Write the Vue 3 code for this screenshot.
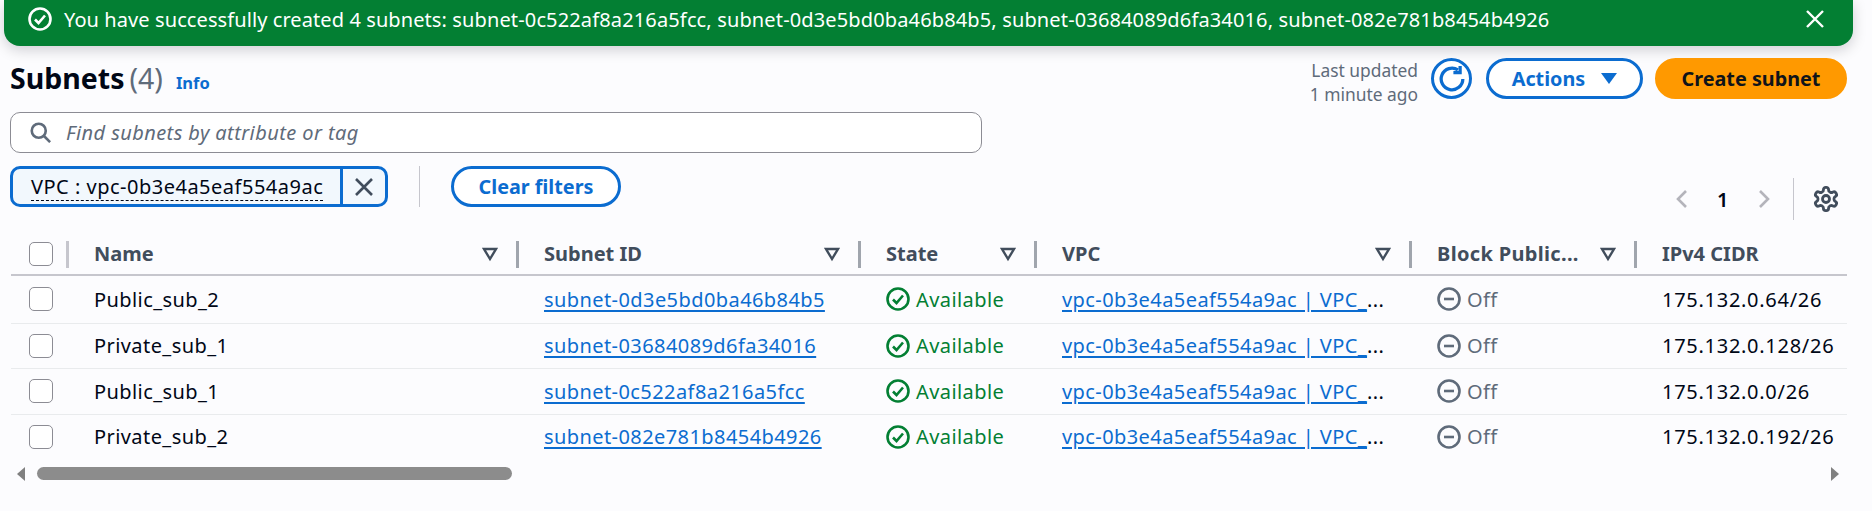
<script setup>
const vpc = 'vpc-0b3e4a5eaf554a9ac | VPC_'
const rows = [
  { name: 'Public_sub_2', id: 'subnet-0d3e5bd0ba46b84b5', cidr: '175.132.0.64/26' },
  { name: 'Private_sub_1', id: 'subnet-03684089d6fa34016', cidr: '175.132.0.128/26' },
  { name: 'Public_sub_1', id: 'subnet-0c522af8a216a5fcc', cidr: '175.132.0.0/26' },
  { name: 'Private_sub_2', id: 'subnet-082e781b8454b4926', cidr: '175.132.0.192/26' }
]
const columns = ['Name', 'Subnet ID', 'State', 'VPC', 'Block Public...']
</script>

<template>
  <div class="page">
    <div class="banner">
      <svg class="banner-icon" viewBox="0 0 24 24" fill="none" stroke="currentColor">
        <circle cx="12" cy="12" r="10.5" stroke-width="2.6" />
        <path d="M7 12.5l3.5 3.5L17 8.5" stroke-width="2.6" />
      </svg>
      <span class="banner-text">You have successfully created 4 subnets: <span class="ids">subnet-0c522af8a216a5fcc, subnet-0d3e5bd0ba46b84b5, subnet-03684089d6fa34016, subnet-082e781b8454b4926</span></span>
      <svg class="banner-close" viewBox="0 0 20 20" fill="none" stroke="currentColor">
        <path d="M2 2l16 16M18 2L2 18" stroke-width="2.4" />
      </svg>
    </div>

    <div class="content">
      <header class="head">
        <div class="title">
          <h1>Subnets</h1><span class="count">(4)</span><a class="info">Info</a>
        </div>
        <div class="head-actions">
          <div class="updated">Last updated<br />1 minute ago</div>
          <button class="btn round">
            <svg viewBox="0 0 24 24" fill="none" stroke="currentColor" stroke-width="3">
              <path d="M22 12a10 10 0 1 1-4.5-8.4" />
              <path d="M19.5 0v6.2h-6.2" />
            </svg>
          </button>
          <button class="btn actions">Actions<span class="caret"></span></button>
          <button class="btn primary">Create subnet</button>
        </div>
      </header>

      <div class="search">
        <svg viewBox="0 0 24 24" fill="none" stroke="currentColor" stroke-width="3">
          <circle cx="10" cy="10" r="8" />
          <path d="M16 16l7 7" />
        </svg>
        <span>Find subnets by attribute or tag</span>
      </div>

      <div class="filters">
        <div class="token">
          <span class="token-label"><span>VPC : vpc-0b3e4a5eaf554a9ac</span></span>
          <span class="token-x">
            <svg viewBox="0 0 20 20" fill="none" stroke="currentColor">
              <path d="M2 2l16 16M18 2L2 18" stroke-width="2.6" />
            </svg>
          </span>
        </div>
        <span class="filter-sep"></span>
        <button class="btn clear">Clear filters</button>
        <div class="pager">
          <svg class="chev" viewBox="0 0 12 20" fill="none" stroke="currentColor" stroke-width="2.6"><path d="M10 2L2 10l8 8" /></svg>
          <span class="page-no">1</span>
          <svg class="chev" viewBox="0 0 12 20" fill="none" stroke="currentColor" stroke-width="2.6"><path d="M2 2l8 8-8 8" /></svg>
          <span class="pager-sep"></span>
          <svg class="gear" viewBox="0 0 24 24" fill="none" stroke="currentColor" stroke-width="2.4">
            <path d="M12.22 2h-.44a2 2 0 0 0-2 2v.18a2 2 0 0 1-1 1.73l-.43.25a2 2 0 0 1-2 0l-.15-.08a2 2 0 0 0-2.73.73l-.22.38a2 2 0 0 0 .73 2.73l.15.1a2 2 0 0 1 1 1.72v.51a2 2 0 0 1-1 1.74l-.15.09a2 2 0 0 0-.73 2.73l.22.38a2 2 0 0 0 2.73.73l.15-.08a2 2 0 0 1 2 0l.43.25a2 2 0 0 1 1 1.73V20a2 2 0 0 0 2 2h.44a2 2 0 0 0 2-2v-.18a2 2 0 0 1 1-1.73l.43-.25a2 2 0 0 1 2 0l.15.08a2 2 0 0 0 2.73-.73l.22-.39a2 2 0 0 0-.73-2.73l-.15-.08a2 2 0 0 1-1-1.74v-.5a2 2 0 0 1 1-1.74l.15-.09a2 2 0 0 0 .73-2.73l-.22-.38a2 2 0 0 0-2.73-.73l-.15.08a2 2 0 0 1-2 0l-.43-.25a2 2 0 0 1-1-1.73V4a2 2 0 0 0-2-2z" />
            <circle cx="12" cy="12" r="3" />
          </svg>
        </div>
      </div>

      <div class="table">
        <div class="row thead">
          <div class="cell cb-cell"><span class="cb"></span></div>
          <div v-for="c in columns" :key="c" class="cell th">
            <span class="label" :class="{ spaced: c.endsWith('...') }">{{ c }}</span>
            <svg viewBox="0 0 16 16" fill="none" stroke="currentColor" stroke-width="2.4"><path d="M2 3h12l-6 10z" /></svg>
          </div>
          <div class="cell last"><span class="label">IPv4 CIDR</span></div>
        </div>
        <div v-for="r in rows" :key="r.id" class="row tbody">
          <div class="cell cb-cell"><span class="cb"></span></div>
          <div class="cell">{{ r.name }}</div>
          <div class="cell"><a class="link">{{ r.id }}</a></div>
          <div class="cell ok">
            <svg viewBox="0 0 24 24" fill="none" stroke="currentColor" stroke-width="2.6">
              <circle cx="12" cy="12" r="10.5" /><path d="M7 12.5l3.5 3.5L17 8.5" />
            </svg>
            <span>Available</span>
          </div>
          <div class="cell"><a class="link">{{ vpc }}</a><span>...</span></div>
          <div class="cell off">
            <svg viewBox="0 0 24 24" fill="none" stroke="currentColor" stroke-width="2.6">
              <circle cx="12" cy="12" r="10.5" /><path d="M7 12h10" />
            </svg>
            <span>Off</span>
          </div>
          <div class="cell cidr">{{ r.cidr }}</div>
        </div>
      </div>
    </div>

    <div class="scrollbar">
      <span class="arrow left"></span>
      <span class="thumb"></span>
      <span class="arrow right"></span>
    </div>
  </div>
</template>

<style>
html, body { margin: 0; background: #fcfcfe; }
</style>

<style scoped>
.page {
  width: 1872px;
  height: 511px;
  overflow: hidden;
  background: #fcfcfe;
  color: #000716;
  font-family: "Noto Sans", sans-serif;
  font-size: 20px;
  letter-spacing: 0.42px;
}
.banner {
  display: flex;
  align-items: center;
  box-sizing: border-box;
  height: 46px;
  margin: 0 19px 0 4px;
  padding: 0 28px 8px 24px;
  background: #037f33;
  color: #fff;
  border-radius: 0 0 16px 16px;
  box-shadow: 0 4px 14px rgba(0, 7, 22, 0.18);
  letter-spacing: 0.09px;
}
.banner-icon { width: 24px; height: 24px; margin-right: 12px; flex: none; }
.banner-text { flex: 1; white-space: nowrap; }
.ids { letter-spacing: 0.14px; }
.banner-close { width: 20px; height: 20px; flex: none; }
.content { padding: 12px 25px 0 10px; }
.head { display: flex; justify-content: space-between; align-items: flex-start; height: 41px; }
.title { display: flex; align-items: baseline; padding-top: 3px; letter-spacing: 0; }
h1 { margin: 0; font-size: 28.5px; line-height: 34px; font-weight: 700; }
.count { margin-left: 5px; font-size: 28.5px; line-height: 34px; color: #5f6b7a; }
.info { margin-left: 13px; font-size: 16.5px; font-weight: 700; color: #0b6cd0; }
.head-actions { display: flex; align-items: flex-start; letter-spacing: 0; }
.updated { text-align: right; font-size: 17.4px; line-height: 24px; color: #5f6b7a; margin-right: 13px; }
.btn {
  box-sizing: border-box;
  height: 41px;
  border: 3px solid #0b6cd0;
  border-radius: 21px;
  background: #fff;
  color: #0b6cd0;
  font: 700 19.8px "Noto Sans", sans-serif;
  padding: 0;
  display: flex;
  align-items: center;
  justify-content: center;
}
.round { width: 41px; margin-right: 14px; }
.round svg { width: 26px; height: 26px; }
.actions { width: 157px; margin-right: 12px; }
.caret {
  width: 0;
  height: 0;
  margin-left: 16px;
  border-left: 8px solid transparent;
  border-right: 8px solid transparent;
  border-top: 11px solid #0b6cd0;
}
.primary { width: 192px; background: #ff9900; border-color: #ff9900; color: #0f141a; }
.search {
  display: flex;
  align-items: center;
  box-sizing: border-box;
  width: 972px;
  height: 41px;
  margin-top: 13px;
  padding-left: 19px;
  background: #fff;
  border: 1px solid #8c8c94;
  border-radius: 10px;
  color: #5f6b7a;
  font-style: italic;
}
.search svg { width: 21px; height: 21px; margin-right: 15px; flex: none; color: #5f6b7a; }
.filters { display: flex; align-items: flex-start; margin-top: 13px; height: 65px; }
.token {
  display: flex;
  box-sizing: border-box;
  width: 378px;
  height: 41px;
  border: 3px solid #0b6cd0;
  border-radius: 10px;
  background: #f2f8fd;
}
.token-label { flex: 1; padding-left: 18px; line-height: 35px; white-space: nowrap; letter-spacing: 0.5px; }
.token-label span { border-bottom: 1px dashed #000716; padding-bottom: 0; }
.token-x {
  display: flex;
  align-items: center;
  justify-content: center;
  width: 42px;
  border-left: 3px solid #0b6cd0;
  color: #414d5c;
}
.token-x svg { width: 20px; height: 20px; }
.filter-sep { width: 1px; height: 41px; margin: 0 31px; background: #c6c6cd; }
.clear { width: 170px; }
.pager { display: flex; align-items: center; margin-left: auto; height: 42px; margin-top: 12px; margin-right: 7px; color: #000716; }
.chev { width: 12px; height: 20px; color: #b4b4bb; }
.page-no { width: 70px; text-align: center; font-weight: 600; }
.pager-sep { width: 1px; height: 42px; margin-left: 23px; background: #c6c6cd; }
.gear { width: 28px; height: 28px; margin-left: 18px; color: #414d5c; }
.table { margin: 0 0 0 1px; }
.row {
  display: grid;
  grid-template-columns: 58px 450px 342px 176px 375px 225px 210px;
  align-items: center;
}
.thead { height: 45px; padding-top: 3px; border-bottom: 2px solid #c6c6cd; box-sizing: border-box; color: #414d5c; font-weight: 700; letter-spacing: 0; }
.label { margin-top: -2px; }
.tbody { height: 46px; padding-bottom: 1px; box-sizing: border-box; border-bottom: 1px solid #e9ebed; }
.tbody:nth-child(2) { height: 48px; }
.tbody:nth-child(3) { height: 45px; }
.tbody:last-child { padding-bottom: 2px; border-bottom-color: transparent; }
.cell { box-sizing: border-box; padding-left: 25px; min-width: 0; white-space: nowrap; display: flex; align-items: center; }
.cb-cell { padding-left: 18px; position: relative; height: 27px; }
.thead .cb-cell::after, .th::after {
  content: "";
  position: absolute;
  right: 0;
  top: 0;
  width: 3px;
  height: 27px;
  background: #a0a5ad;
}
.thead .cb-cell::after { background: #c6c6cd; }
.cb { box-sizing: border-box; width: 24px; height: 24px; border: 1.5px solid #8c8c94; border-radius: 5px; background: #fff; }
.th { position: relative; height: 27px; justify-content: space-between; padding-right: 21px; }
.th svg { width: 16px; height: 16px; flex: none; }
.spaced { letter-spacing: 0.33px; }
.link { color: #0b6cd0; text-decoration: underline; text-underline-offset: 3px; }
.ok { color: #037f33; }
.off { color: #5f6b7a; }
.ok svg, .off svg { width: 24px; height: 24px; margin-right: 6px; flex: none; }
.cidr { letter-spacing: 0.72px; }
.scrollbar { display: flex; align-items: center; height: 13px; margin-top: 6px; padding-left: 17px; }
.thumb { width: 475px; height: 13px; margin-left: 12px; border-radius: 7px; background: #8c8c8c; }
.arrow { width: 0; height: 0; border-top: 7px solid transparent; border-bottom: 7px solid transparent; }
.left { border-right: 8px solid #808080; }
.right { margin-left: 1319px; border-left: 8px solid #808080; }
</style>
